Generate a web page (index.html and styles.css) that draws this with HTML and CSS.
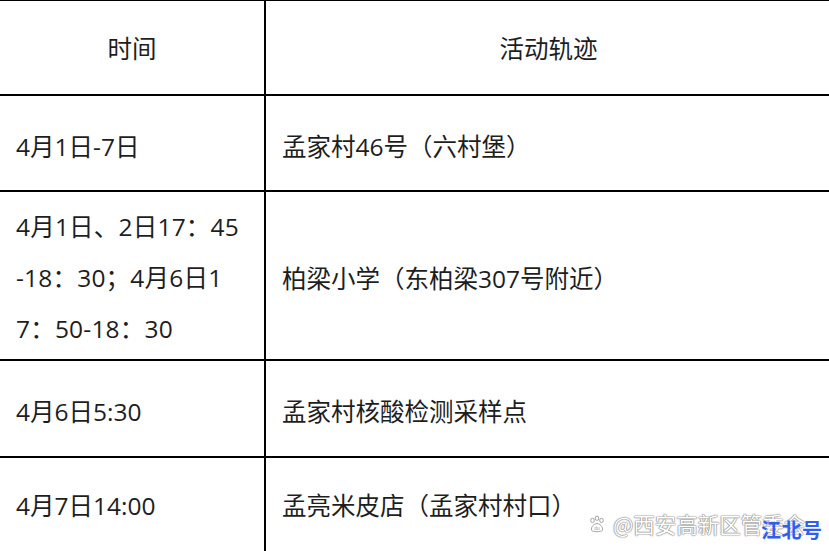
FILE: index.html
```html
<!DOCTYPE html>
<html lang="zh">
<head>
<meta charset="utf-8">
<link rel="stylesheet" href="styles.css">
</head>
<body>
<div class="page">
  <table class="track">
    <colgroup><col class="c-time"><col class="c-place"></colgroup>
    <tr class="r-head">
      <th>时间</th>
      <th>活动轨迹</th>
    </tr>
    <tr class="r-1">
      <td>4月1日-7日</td>
      <td>孟家村46号（六村堡）</td>
    </tr>
    <tr class="r-2">
      <td class="multi">4月1日、2日17：45<br>-18：30；4月6日1<br>7：50-18：30</td>
      <td>柏梁小学（东柏梁307号附近）</td>
    </tr>
    <tr class="r-3">
      <td>4月6日5:30</td>
      <td>孟家村核酸检测采样点</td>
    </tr>
    <tr class="r-4">
      <td>4月7日14:00</td>
      <td>孟亮米皮店（孟家村村口）</td>
    </tr>
  </table>
  <div class="watermark">
    <svg class="paw" viewBox="0 0 20 20" width="18" height="18" aria-hidden="true">
      <g fill="#fff" stroke="#9a9a9a" stroke-width="1">
        <ellipse cx="5" cy="6" rx="2" ry="2.4"/>
        <ellipse cx="10" cy="3.6" rx="2" ry="2.4"/>
        <ellipse cx="15" cy="6" rx="2" ry="2.4"/>
        <path d="M4 17 C3 13 7 9.5 10 9.5 C13 9.5 17 13 16 17 C15 19 5 19 4 17 Z"/>
      </g>
      <text x="10" y="16.5" font-size="5.5" text-anchor="middle" fill="#9a9a9a" font-family="Liberation Sans, sans-serif">du</text>
    </svg>
    <span class="wm-text">@西安高新区管委会</span>
  </div>
  <div class="brand">江北号</div>
</div>
</body>
</html>
```
FILE: styles.css
```css
html, body {
  margin: 0;
  padding: 0;
  background: #fff;
}
body {
  width: 829px;
  height: 551px;
  overflow: hidden;
  font-family: "Open Sans", "Noto Sans CJK SC", sans-serif;
  color: #1e1e1e;
}
.page {
  position: relative;
  width: 829px;
  height: 551px;
  overflow: hidden;
}
.track {
  border-collapse: collapse;
  width: 832px;
  margin-top: -1px;
  table-layout: fixed;
  font-size: 24.5px;
}
.c-time { width: 265px; }
.c-place { width: 567px; }
.track th, .track td {
  border: 2px solid #000;
  padding: 4px 16px 0;
  text-align: left;
  font-weight: normal;
  vertical-align: middle;
}
.track th {
  text-align: center;
  padding-top: 0;
}
.track tr > :first-child {
  border-left: none;
}
.r-head > * { height: 93px; }
.r-1 > * { height: 90px; }
.r-2 > * { height: 163px; }
.r-3 > * { height: 91px; }
.r-4 > * { height: 93px; }
.r-4 > td { padding-top: 0; }
.multi {
  line-height: 51px;
  padding-top: 10px;
  letter-spacing: 0.2px;
}
.r-2 > .multi { height: 157px; }
.watermark {
  position: absolute;
  left: 588px;
  top: 508px;
  display: flex;
  align-items: center;
  gap: 7px;
}
.wm-text {
  font-family: "Noto Sans CJK SC", sans-serif;
  font-size: 21.5px;
  color: #fff;
  text-shadow: 0 0 1px #777, 0 0 1px #777, 0 0 2px #999;
}
.brand {
  position: absolute;
  left: 761px;
  top: 515px;
  font-family: "Noto Sans CJK SC", sans-serif;
  font-weight: bold;
  font-size: 20px;
  color: #2f5ef5;
  letter-spacing: 0.5px;
}
```
